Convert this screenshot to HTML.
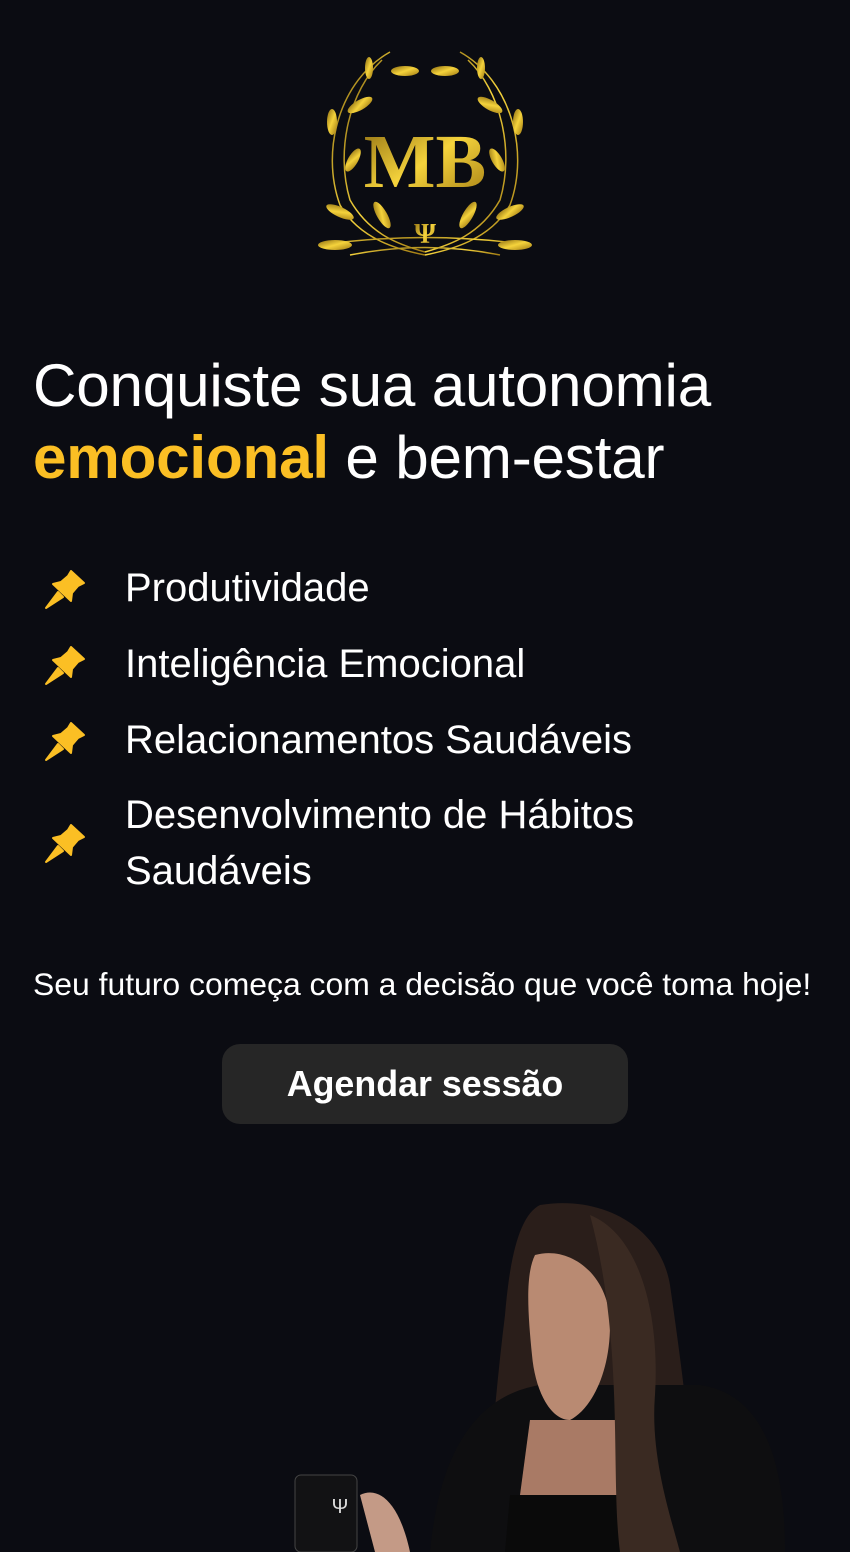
<!DOCTYPE html>
<html><head><meta charset="utf-8"><style>
body{margin:0;background:#0b0c12;width:850px;height:1552px;overflow:hidden;font-family:"Liberation Sans",sans-serif;color:#fff;position:relative}
h1{position:absolute;left:33px;top:350px;margin:0;font-weight:400;font-size:60.2px;line-height:72px;letter-spacing:-0.2px}
h1 b{color:#fbbf24;font-weight:700}
.li{position:absolute;left:125px;font-size:40px;line-height:56px}
.pin{position:absolute;left:44px;width:42px;height:42px}
.tag{position:absolute;left:33px;top:966px;font-size:31.9px}
.btn{position:absolute;left:222px;top:1044px;width:406px;height:80px;border-radius:18px;background:#262626;text-align:center;line-height:80px;font-size:35.8px;font-weight:700}
</style></head><body>
<svg style="position:absolute;left:300px;top:40px" width="250" height="240" viewBox="0 0 250 240">
<defs><linearGradient id="g" x1="0" y1="0" x2="1" y2="1"><stop offset="0" stop-color="#8a6a10"/><stop offset=".5" stop-color="#f5d33c"/><stop offset="1" stop-color="#a07a12"/></linearGradient></defs>
<g fill="none" stroke="url(#g)" stroke-width="1.5">
<path d="M90 12 C40 40 20 110 40 165 C60 200 100 210 125 215"/>
<path d="M160 12 C210 40 230 110 210 165 C190 200 150 210 125 215"/>
<path d="M82 20 C50 50 35 110 50 160 C70 195 100 205 125 212"/>
<path d="M168 20 C200 50 215 110 200 160 C180 195 150 205 125 212"/>
<path d="M20 205 Q125 190 230 205"/>
<path d="M50 215 Q125 200 200 215"/>
</g>
<g fill="url(#g)">
<ellipse cx="105" cy="31" rx="14" ry="5"/><ellipse cx="145" cy="31" rx="14" ry="5"/>
<ellipse cx="69" cy="28" rx="4" ry="11"/><ellipse cx="181" cy="28" rx="4" ry="11"/>
<ellipse cx="60" cy="65" rx="14" ry="5" transform="rotate(-30 60 65)"/><ellipse cx="190" cy="65" rx="14" ry="5" transform="rotate(30 190 65)"/>
<ellipse cx="32" cy="82" rx="5" ry="13"/><ellipse cx="218" cy="82" rx="5" ry="13"/>
<ellipse cx="53" cy="120" rx="5" ry="13" transform="rotate(30 53 120)"/><ellipse cx="197" cy="120" rx="5" ry="13" transform="rotate(-30 197 120)"/>
<ellipse cx="40" cy="172" rx="15" ry="5" transform="rotate(25 40 172)"/><ellipse cx="210" cy="172" rx="15" ry="5" transform="rotate(-25 210 172)"/>
<ellipse cx="82" cy="175" rx="5" ry="15" transform="rotate(-30 82 175)"/><ellipse cx="168" cy="175" rx="5" ry="15" transform="rotate(30 168 175)"/>
<ellipse cx="35" cy="205" rx="17" ry="5"/><ellipse cx="215" cy="205" rx="17" ry="5"/>
</g>
<text x="125" y="147" text-anchor="middle" font-family="Liberation Serif,serif" font-weight="bold" font-size="76" fill="url(#g)">MB</text>
<text x="125" y="203" text-anchor="middle" font-family="Liberation Serif,serif" font-weight="bold" font-size="28" fill="url(#g)">Ψ</text>
</svg>
<h1>Conquiste sua autonomia<br><b>emocional</b> e bem-estar</h1>
<svg class="pin" style="top:568px" viewBox="0 0 42 42"><path d="M27 3 L40 15 L34 18 L28 25 L27 33 L9 16 L17 14 L24 8 Z M14 24 L2 40 L19 29 Z" fill="#fbbf24" stroke="#fbbf24" stroke-width="2" stroke-linejoin="round"/></svg>
<div class="li" style="top:560px">Produtividade</div>
<svg class="pin" style="top:644px" viewBox="0 0 42 42"><path d="M27 3 L40 15 L34 18 L28 25 L27 33 L9 16 L17 14 L24 8 Z M14 24 L2 40 L19 29 Z" fill="#fbbf24" stroke="#fbbf24" stroke-width="2" stroke-linejoin="round"/></svg>
<div class="li" style="top:636px">Inteligência Emocional</div>
<svg class="pin" style="top:720px" viewBox="0 0 42 42"><path d="M27 3 L40 15 L34 18 L28 25 L27 33 L9 16 L17 14 L24 8 Z M14 24 L2 40 L19 29 Z" fill="#fbbf24" stroke="#fbbf24" stroke-width="2" stroke-linejoin="round"/></svg>
<div class="li" style="top:712px">Relacionamentos Saudáveis</div>
<svg class="pin" style="top:822px" viewBox="0 0 42 42"><path d="M27 3 L40 15 L34 18 L28 25 L27 33 L9 16 L17 14 L24 8 Z M14 24 L2 40 L19 29 Z" fill="#fbbf24" stroke="#fbbf24" stroke-width="2" stroke-linejoin="round"/></svg>
<div class="li" style="top:787px">Desenvolvimento de Hábitos<br>Saudáveis</div>
<div class="tag">Seu futuro começa com a decisão que você toma hoje!</div>
<div class="btn">Agendar sessão</div>
<svg style="position:absolute;left:280px;top:1195px" width="520" height="357" viewBox="0 0 520 357">
<path d="M260 10 C320 0 380 30 390 90 C400 160 410 230 420 357 L200 357 C210 280 215 200 225 120 C230 60 240 20 260 10 Z" fill="#2a1e1a"/>
<path d="M150 357 C160 250 200 200 260 190 L420 190 C490 200 505 280 505 357 Z" fill="#0e0e10"/>
<path d="M255 60 C290 50 330 80 330 130 C330 180 310 215 290 225 C270 225 255 195 252 160 C248 120 245 80 255 60 Z" fill="#b98a72"/>
<path d="M250 225 L340 225 L345 300 L240 300 Z" fill="#a97a65"/>
<path d="M230 300 L360 300 L350 357 L225 357 Z" fill="#0a0a0a"/>
<path d="M310 20 C360 40 380 120 375 200 C370 260 390 320 400 357 L340 357 C330 280 345 150 310 20 Z" fill="#3a2a22"/>
<rect x="15" y="280" width="62" height="77" rx="6" fill="#121214" stroke="#444" />
<text x="60" y="318" fill="#ddd" font-size="20" text-anchor="middle">Ψ</text>
<path d="M80 300 C100 290 120 310 130 357 L95 357 Z" fill="#c49a86"/>
</svg>
</body></html>
